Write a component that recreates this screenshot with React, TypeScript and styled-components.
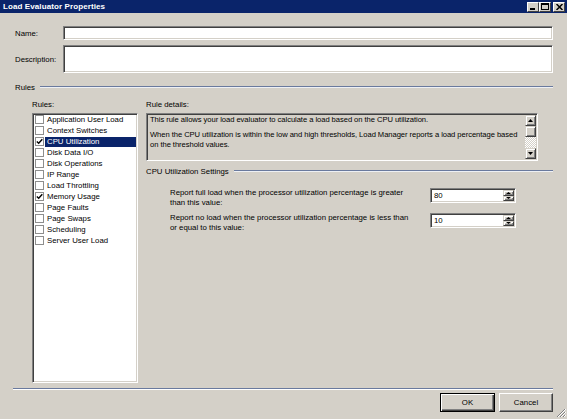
import React from 'react';
import styled, { createGlobalStyle } from 'styled-components';

const GlobalStyle = createGlobalStyle`
  html, body {
    margin: 0;
    padding: 0;
    background: #d4d0c8;
  }
  body {
    font-family: 'Liberation Sans', Arial, sans-serif;
    font-size: 7.8px;
    color: #000;
  }
`;

const Window = styled.div`
  width: 567px;
  height: 419px;
  background: #d4d0c8;
  display: flex;
  flex-direction: column;
  overflow: hidden;
  position: relative;
`;

const TitleBar = styled.div`
  height: 13px;
  background: #0a246a;
  display: flex;
  align-items: center;
  justify-content: space-between;
  padding: 0 2px 0 3px;
`;

const TitleText = styled.span`
  color: #fff;
  font-weight: bold;
  font-size: 8px;
  letter-spacing: 0.1px;
`;

const CaptionButtons = styled.div`
  display: flex;
`;

const CaptionButton = styled.div<{ $gap?: boolean }>`
  width: 12px;
  height: 10px;
  box-sizing: border-box;
  background: #d4d0c8;
  border: 1px solid;
  border-color: #fff #404040 #404040 #fff;
  margin-left: ${(p) => (p.$gap ? '2px' : '0')};
  display: flex;
  align-items: center;
  justify-content: center;
`;

const Body = styled.div`
  flex: 1;
  display: flex;
  flex-direction: column;
  padding: 13px 14px 0 15px;
`;

const FieldRow = styled.div`
  display: grid;
  grid-template-columns: 48px 1fr;
  align-items: center;
  margin-bottom: 5px;
`;

const sunken = `
  box-sizing: border-box;
  border: 1px solid;
  border-color: #808080 #fff #fff #808080;
  box-shadow: inset 1px 1px 0 #404040, inset -1px -1px 0 #d4d0c8;
`;

const TextInput = styled.div<{ $tall?: boolean }>`
  height: ${(p) => (p.$tall ? 28 : 14)}px;
  background: #fff;
  ${sunken}
`;

const GroupHeader = styled.div<{ $top: number }>`
  display: flex;
  align-items: center;
  gap: 5px;
  height: 10px;
  margin-top: ${(p) => p.$top}px;
`;

const GroupLine = styled.div`
  flex: 1;
  border-top: 1px solid #6a7a9e;
  border-bottom: 1px solid #eef0f4;
`;

const RulesArea = styled.div`
  display: grid;
  grid-template-columns: 106px 1fr;
  column-gap: 8px;
  padding-left: 17px;
  margin-top: 8px;
`;

const Column = styled.div`
  display: flex;
  flex-direction: column;
`;

const ColLabel = styled.div`
  height: 10px;
  line-height: 10px;
  margin-bottom: 3px;
`;

const RuleList = styled.div`
  height: 270px;
  background: #fff;
  ${sunken}
`;

const RuleItem = styled.div`
  height: 11px;
  display: flex;
  align-items: center;
  padding-left: 2px;
`;

const CheckBox = styled.div`
  width: 9px;
  height: 9px;
  box-sizing: border-box;
  border: 1px solid #8e8e8e;
  background: #fff;
  display: flex;
  align-items: center;
  justify-content: center;
  flex-shrink: 0;
`;

const RuleName = styled.span<{ $selected?: boolean }>`
  flex: 1;
  margin: 0 1px;
  padding-left: 2px;
  height: 10px;
  line-height: 10px;
  background: ${(p) => (p.$selected ? '#0a246a' : 'transparent')};
  color: ${(p) => (p.$selected ? '#fff' : '#000')};
  white-space: nowrap;
`;

const DetailsBox = styled.div`
  width: 392px;
  height: 48px;
  background: #d4d0c8;
  ${sunken}
  display: flex;
  padding: 1px;
`;

const DetailsText = styled.div`
  flex: 1;
  padding: 0 2px;
  font-size: 7.6px;
  letter-spacing: -0.05px;
  line-height: 10px;
  white-space: nowrap;
  overflow: hidden;
`;

const Para = styled.div<{ $gap?: number }>`
  margin-top: ${(p) => p.$gap || 0}px;
`;

const ScrollBar = styled.div`
  width: 11px;
  display: flex;
  flex-direction: column;
`;

const raised = `
  box-sizing: border-box;
  background: #d4d0c8;
  border: 1px solid;
  border-color: #d4d0c8 #404040 #404040 #d4d0c8;
  box-shadow: inset 1px 1px 0 #fff, inset -1px -1px 0 #808080;
`;

const ScrollButton = styled.div`
  height: 11px;
  ${raised}
  display: flex;
  align-items: center;
  justify-content: center;
`;

const ScrollTrack = styled.div`
  flex: 1;
  background-color: #ece9e4;
  background-image: repeating-conic-gradient(#d4d0c8 0 25%, #fff 0 50%);
  background-size: 2px 2px;
`;

const SettingsGrid = styled.div`
  display: grid;
  grid-template-columns: 252px 86px;
  column-gap: 8px;
  row-gap: 5px;
  padding-left: 24px;
  margin-top: 12px;
  align-items: start;
`;

const SettingText = styled.div`
  line-height: 10px;
  height: 20px;
`;

const Spinner = styled.div`
  height: 15px;
  background: #fff;
  ${sunken}
  display: flex;
  align-items: stretch;
  padding: 1px;
`;

const SpinValue = styled.div`
  flex: 1;
  padding-left: 2px;
  line-height: 11px;
`;

const SpinButtons = styled.div`
  width: 11px;
  display: flex;
  flex-direction: column;
`;

const SpinButton = styled.div`
  flex: 1;
  ${raised}
  display: flex;
  align-items: center;
  justify-content: center;
`;

const Footer = styled.div`
  display: flex;
  flex-direction: column;
  margin: 5px 0 0 -2px;
`;

const Separator = styled.div`
  border-top: 1px solid #6a7a9e;
  border-bottom: 1px solid #fff;
`;

const ButtonRow = styled.div`
  display: flex;
  justify-content: flex-end;
  gap: 4px;
  margin-top: 3px;
`;

const DialogButton = styled.div<{ $default?: boolean; $width: number }>`
  width: ${(p) => p.$width}px;
  height: 19px;
  box-sizing: border-box;
  background: #d4d0c8;
  border: 1px solid;
  border-color: ${(p) => (p.$default ? '#000' : '#fff #404040 #404040 #fff')};
  box-shadow: ${(p) =>
    p.$default
      ? 'inset 1px 1px 0 #fff, inset -1px -1px 0 #404040, inset -2px -2px 0 #808080'
      : 'inset -1px -1px 0 #808080'};
  display: flex;
  align-items: center;
  justify-content: center;
`;

const SizeGrip = styled.svg`
  position: absolute;
  right: 1px;
  bottom: 1px;
`;

const Check = () => (
  <svg width="7" height="7" viewBox="0 0 7 7">
    <path d="M0.8 3.4 L2.7 5.3 L6.3 1.2" fill="none" stroke="#000" strokeWidth="1.4" />
  </svg>
);

const Arrow = ({ up, w = 5, h = 3 }: { up?: boolean; w?: number; h?: number }) => (
  <svg width={w} height={h} viewBox={`0 0 ${w} ${h}`}>
    <polygon points={up ? `0,${h} ${w},${h} ${w / 2},0` : `0,0 ${w},0 ${w / 2},${h}`} fill="#000" />
  </svg>
);

const rules = [
  { name: 'Application User Load' },
  { name: 'Context Switches' },
  { name: 'CPU Utilization', checked: true, selected: true },
  { name: 'Disk Data I/O' },
  { name: 'Disk Operations' },
  { name: 'IP Range' },
  { name: 'Load Throttling' },
  { name: 'Memory Usage', checked: true },
  { name: 'Page Faults' },
  { name: 'Page Swaps' },
  { name: 'Scheduling' },
  { name: 'Server User Load' },
];

const settings = [
  {
    lines: ['Report full load when the processor utilization percentage is greater', 'than this value:'],
    value: '80',
  },
  {
    lines: ['Report no load when the processor utilization percentage is less than', 'or equal to this value:'],
    value: '10',
  },
];

export default function App() {
  return (
    <>
      <GlobalStyle />
      <Window>
        <TitleBar>
          <TitleText>Load Evaluator Properties</TitleText>
          <CaptionButtons>
            <CaptionButton>
              <svg width="6" height="6" viewBox="0 0 6 6">
                <rect x="0" y="4" width="5" height="2" fill="#000" />
              </svg>
            </CaptionButton>
            <CaptionButton>
              <svg width="8" height="7" viewBox="0 0 8 7">
                <rect x="0.5" y="0.5" width="7" height="6" fill="none" stroke="#000" />
                <rect x="0" y="0" width="8" height="2" fill="#000" />
              </svg>
            </CaptionButton>
            <CaptionButton $gap>
              <svg width="7" height="6" viewBox="0 0 7 6">
                <path d="M0.5 0 L6.5 6 M6.5 0 L0.5 6" stroke="#000" strokeWidth="1.5" />
              </svg>
            </CaptionButton>
          </CaptionButtons>
        </TitleBar>

        <Body>
          <FieldRow>
            <span>Name:</span>
            <TextInput />
          </FieldRow>
          <FieldRow>
            <span>Description:</span>
            <TextInput $tall />
          </FieldRow>

          <GroupHeader $top={4}>
            <span>Rules</span>
            <GroupLine />
          </GroupHeader>

          <RulesArea>
            <Column>
              <ColLabel>Rules:</ColLabel>
              <RuleList>
                {rules.map((r) => (
                  <RuleItem key={r.name}>
                    <CheckBox>{r.checked && <Check />}</CheckBox>
                    <RuleName $selected={r.selected}>{r.name}</RuleName>
                  </RuleItem>
                ))}
              </RuleList>
            </Column>

            <Column>
              <ColLabel>Rule details:</ColLabel>
              <DetailsBox>
                <DetailsText>
                  <Para>This rule allows your load evaluator to calculate a load based on the CPU utilization.</Para>
                  <Para $gap={5}>
                    When the CPU utilization is within the low and high thresholds, Load Manager reports a load percentage based
                  </Para>
                  <Para>on the threshold values.</Para>
                </DetailsText>
                <ScrollBar>
                  <ScrollButton>
                    <Arrow up />
                  </ScrollButton>
                  <ScrollButton />
                  <ScrollTrack />
                  <ScrollButton>
                    <Arrow />
                  </ScrollButton>
                </ScrollBar>
              </DetailsBox>

              <GroupHeader $top={5}>
                <span>CPU Utilization Settings</span>
                <GroupLine />
              </GroupHeader>

              <SettingsGrid>
                {settings.map((s) => (
                  <React.Fragment key={s.value}>
                    <SettingText>
                      {s.lines.map((l) => (
                        <div key={l}>{l}</div>
                      ))}
                    </SettingText>
                    <Spinner>
                      <SpinValue>{s.value}</SpinValue>
                      <SpinButtons>
                        <SpinButton>
                          <Arrow up w={5} h={2} />
                        </SpinButton>
                        <SpinButton>
                          <Arrow w={5} h={2} />
                        </SpinButton>
                      </SpinButtons>
                    </Spinner>
                  </React.Fragment>
                ))}
              </SettingsGrid>
            </Column>
          </RulesArea>

          <Footer>
            <Separator />
            <ButtonRow>
              <DialogButton $default $width={55}>OK</DialogButton>
              <DialogButton $width={54}>Cancel</DialogButton>
            </ButtonRow>
          </Footer>
        </Body>

        <SizeGrip width="10" height="10" viewBox="0 0 10 10">
          <path d="M9 1 L1 9 M9 4 L4 9 M9 7 L7 9" stroke="#808080" strokeWidth="1" />
          <path d="M10 1 L2 9 M10 4 L5 9 M10 7 L8 9" stroke="#fff" strokeWidth="1" />
        </SizeGrip>
      </Window>
    </>
  );
}
